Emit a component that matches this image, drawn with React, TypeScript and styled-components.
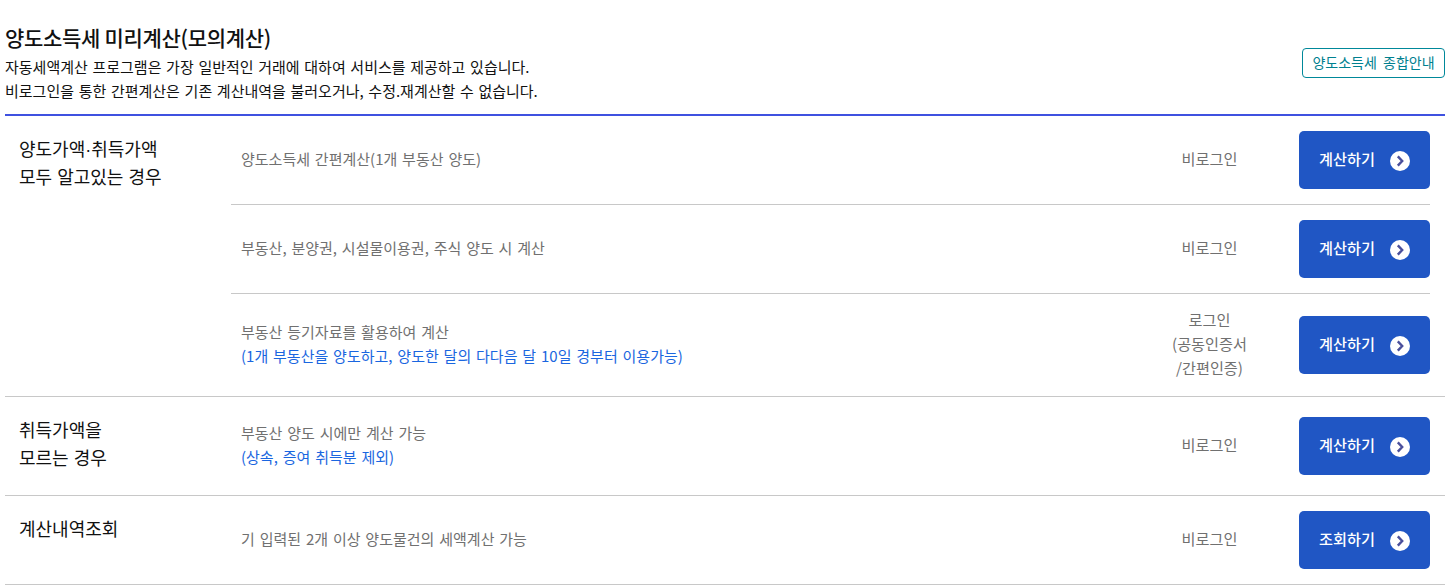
import styled, { createGlobalStyle } from "styled-components";

const GlobalStyle = createGlobalStyle`
  html, body {
    margin: 0;
    padding: 0;
    background: #fff;
    font-family: "Noto Sans CJK KR", "Noto Sans", sans-serif;
  }
  * {
    box-sizing: border-box;
  }
`;

const Dot = styled.span`
  font-family: "Liberation Sans", sans-serif;
  line-height: 0;
`;

type Row = {
  desc: string;
  note?: string;
  status: string[];
  action: string;
  height: number;
  last?: boolean;
};

type Group = {
  id: string;
  label: React.ReactNode[];
  rows: Row[];
};

const groups: Group[] = [
  {
    id: "both",
    label: [
      <>
        양도가액<Dot>·</Dot>취득가액
      </>,
      "모두 알고있는 경우",
    ],
    rows: [
      { desc: "양도소득세 간편계산(1개 부동산 양도)", status: ["비로그인"], action: "계산하기", height: 89 },
      { desc: "부동산, 분양권, 시설물이용권, 주식 양도 시 계산", status: ["비로그인"], action: "계산하기", height: 89 },
      {
        desc: "부동산 등기자료를 활용하여 계산",
        note: "(1개 부동산을 양도하고, 양도한 달의 다다음 달 10일 경부터 이용가능)",
        status: ["로그인", "(공동인증서", "/간편인증)"],
        action: "계산하기",
        height: 102,
        last: true,
      },
    ],
  },
  {
    id: "unknown",
    label: ["취득가액을", "모르는 경우"],
    rows: [
      {
        desc: "부동산 양도 시에만 계산 가능",
        note: "(상속, 증여 취득분 제외)",
        status: ["비로그인"],
        action: "계산하기",
        height: 98,
        last: true,
      },
    ],
  },
  {
    id: "history",
    label: ["계산내역조회"],
    rows: [
      { desc: "기 입력된 2개 이상 양도물건의 세액계산 가능", status: ["비로그인"], action: "조회하기", height: 88, last: true },
    ],
  },
];

const ArrowIcon = () => (
  <ArrowSvg width="20" height="20" viewBox="0 0 20 20" aria-hidden="true">
    <circle cx="10" cy="10" r="10" fill="#fff" />
    <path d="M7.8 5.4 L12.2 10 L7.8 14.6" fill="none" stroke="#4a4f9c" strokeWidth="2.4" />
  </ArrowSvg>
);

export default function App() {
  return (
    <>
      <GlobalStyle />
      <Page>
        <Header>
          <div>
            <Title>양도소득세 미리계산(모의계산)</Title>
            <Intro>자동세액계산 프로그램은 가장 일반적인 거래에 대하여 서비스를 제공하고 있습니다.</Intro>
            <Intro>비로그인을 통한 간편계산은 기존 계산내역을 불러오거나, 수정.재계산할 수 없습니다.</Intro>
          </div>
          <GuideButton>양도소득세 종합안내</GuideButton>
        </Header>
        {groups.map((group) => (
          <GroupRow key={group.id}>
            <GroupLabel>
              {group.label.map((line, i) => (
                <div key={i}>{line}</div>
              ))}
            </GroupLabel>
            <Rows>
              {group.rows.map((row) => (
                <ItemRow key={row.desc} $height={row.height} $last={row.last}>
                  <Desc>
                    <div>{row.desc}</div>
                    {row.note && <Note>{row.note}</Note>}
                  </Desc>
                  <Status>
                    {row.status.map((line) => (
                      <div key={line}>{line}</div>
                    ))}
                  </Status>
                  <ActionButton>
                    {row.action}
                    <ArrowIcon />
                  </ActionButton>
                </ItemRow>
              ))}
            </Rows>
          </GroupRow>
        ))}
      </Page>
    </>
  );
}

const Page = styled.main`
  width: 1450px;
  padding: 0 5px;
`;

const Header = styled.header`
  display: flex;
  justify-content: space-between;
  align-items: flex-start;
  height: 116px;
  padding-top: 23px;
  border-bottom: 2px solid #3f51e0;
`;

const Title = styled.h2`
  margin: 0 0 4px;
  font-size: 21px;
  line-height: 28px;
  font-weight: 500;
  letter-spacing: -0.3px;
  color: #111;
`;

const Intro = styled.p`
  margin: 0;
  font-size: 15px;
  line-height: 24px;
  word-spacing: 1.3px;
  color: #111;
`;

const GuideButton = styled.button`
  width: 143px;
  height: 30px;
  margin-top: 25px;
  padding: 0 0 2px;
  background: #fff;
  border: 1px solid #00889a;
  border-radius: 4px;
  color: #00808f;
  font-family: inherit;
  font-size: 14px;
  word-spacing: 3px;
`;

const GroupRow = styled.section`
  display: flex;
  border-bottom: 1px solid #c8c8c8;
`;

const GroupLabel = styled.div`
  flex: 0 0 226px;
  padding: 18px 0 0 14px;
  font-size: 18px;
  line-height: 28px;
  word-spacing: 1px;
  color: #111;
`;

const Rows = styled.div`
  flex: 1;
  padding-right: 15px;
`;

const ItemRow = styled.div<{ $height: number; $last?: boolean }>`
  display: flex;
  align-items: center;
  height: ${(props) => props.$height}px;
  border-bottom: ${(props) => (props.$last ? "none" : "1px solid #c8c8c8")};
`;

const Desc = styled.div`
  flex: 1;
  padding: 0 0 2px 10px;
  font-size: 15px;
  line-height: 24px;
  word-spacing: 1.5px;
  color: #707070;
`;

const Note = styled.div`
  color: #1a66e0;
`;

const Status = styled.div`
  width: 116px;
  margin-right: 31.5px;
  padding-bottom: 4px;
  font-size: 15.2px;
  line-height: 24px;
  color: #707070;
  text-align: center;
`;

const ActionButton = styled.button`
  display: flex;
  align-items: center;
  justify-content: center;
  gap: 15px;
  width: 131px;
  height: 58px;
  padding: 0 0 4px;
  background: #2056c4;
  border: 0;
  border-radius: 5px;
  color: #fff;
  font-family: inherit;
  font-size: 15.2px;
  font-weight: 500;
`;

const ArrowSvg = styled.svg`
  margin-top: 6px;
`;
